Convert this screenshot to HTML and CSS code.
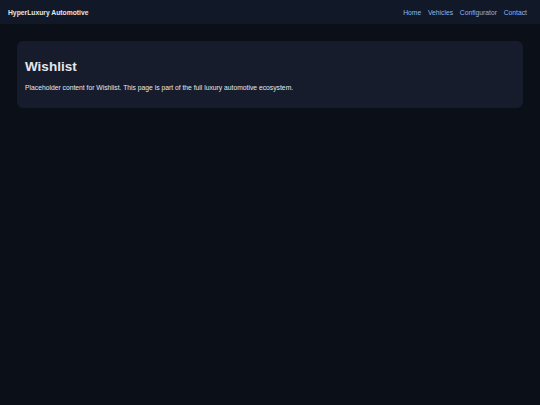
FILE: index.html
```html
<!DOCTYPE html>
<html lang="en">
<head>
<meta charset="utf-8">
<title>Wishlist - HyperLuxury Automotive</title>
<link rel="stylesheet" href="styles.css">
</head>
<body>
<header class="site-header">
  <div class="brand">HyperLuxury Automotive</div>
  <nav class="nav">
    <a href="#">Home</a>
    <a href="#">Vehicles</a>
    <a href="#">Configurator</a>
    <a href="#">Contact</a>
  </nav>
</header>
<main class="main">
  <section class="card">
    <h1 class="card-title">Wishlist</h1>
    <p class="card-text">Placeholder content for Wishlist. This page is part of the full luxury automotive ecosystem.</p>
  </section>
</main>
</body>
</html>
```

FILE: styles.css
```css
html, body {
  margin: 0;
  padding: 0;
  background: #0b0f17;
  color: #e5e7eb;
  font-family: "Liberation Sans", Arial, sans-serif;
  font-size: 6.75px;
}
body {
  min-height: 405px;
}
.site-header {
  display: flex;
  align-items: center;
  justify-content: space-between;
  height: 24px;
  padding: 0 13px 0 8px;
  background: #111827;
}
.brand {
  font-weight: bold;
  color: #e5e7eb;
}
.nav {
  display: flex;
  gap: 6.75px;
}
.nav a {
  color: #93b4e6;
  text-decoration: none;
}
.main {
  padding: 17px;
}
.card {
  background: #161c2c;
  border-radius: 6px;
  padding: 8.5px 8px;
}
.card-title {
  font-size: 13.5px;
  margin: 9px 0;
  font-weight: bold;
}
.card-text {
  margin: 6.75px 0;
  line-height: 1.5;
}
```
